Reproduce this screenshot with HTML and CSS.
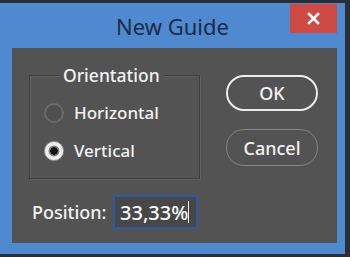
FILE: index.html
```html
<!DOCTYPE html>
<html>
<head>
<meta charset="utf-8">
<link rel="stylesheet" href="styles.css">
</head>
<body>
<div class="window">
  <div class="titlebar">
    <div class="spacer"></div>
    <div class="title">New Guide</div>
    <div class="close">
      <svg width="13" height="13" viewBox="0 0 13 13"><path d="M2 2 L11 11 M11 2 L2 11" stroke="#fff" stroke-width="2.6" stroke-linecap="square"/></svg>
    </div>
  </div>
  <div class="panel">
    <div class="left">
      <div class="group">
        <div class="legend">Orientation</div>
        <div class="radio-row"><span class="radio off"></span><span class="label">Horizontal</span></div>
        <div class="radio-row"><span class="radio on"></span><span class="label">Vertical</span></div>
      </div>
      <div class="position-row">
        <span class="pos-label">Position:</span>
        <div class="input">33,33%<span class="caret"></span></div>
      </div>
    </div>
    <div class="buttons">
      <div class="btn primary">OK</div>
      <div class="btn secondary">Cancel</div>
    </div>
  </div>
</div>
</body>
</html>
```
FILE: styles.css
```css
html, body {
  margin: 0;
  padding: 0;
}
body {
  background: #2a2e35;
  width: 350px;
  height: 257px;
  overflow: hidden;
  font-family: "Noto Sans", "Open Sans", sans-serif;
}
.window {
  margin-top: 3px;
  width: 345px;
  height: 251px;
  background: #4f89cf;
  display: flex;
  flex-direction: column;
}
.titlebar {
  height: 45px;
  display: grid;
  grid-template-columns: 1fr auto 1fr;
  align-items: center;
}
.title {
  font-size: 22px;
  color: #1d2b47;
  line-height: 24px;
  margin-top: 1px;
}
.close {
  justify-self: end;
  align-self: start;
  margin-top: 1px;
  margin-right: 8px;
  width: 47px;
  height: 29px;
  background: #d04a44;
  display: flex;
  align-items: center;
  justify-content: center;
}
.panel {
  margin: 0 8px 0 12px;
  height: 195px;
  background: #535353;
  box-sizing: border-box;
  padding: 27px 0 0 17px;
  display: flex;
  align-items: flex-start;
  color: #f2f2f2;
  font-weight: 500;
}
.left {
  width: 171px;
  display: flex;
  flex-direction: column;
}
.group {
  height: 104px;
  box-sizing: border-box;
  border: 1px solid #3f3f3f;
  box-shadow: 1px 1px 0 #626262, inset 1px 1px 0 #626262;
  padding: 0 0 0 14px;
  display: flex;
  flex-direction: column;
}
.legend {
  align-self: flex-start;
  margin: -11px 0 0 15px;
  padding: 0 4px;
  background: #535353;
  font-size: 17.5px;
  line-height: 20px;
  margin-bottom: 9px;
}
.radio-row {
  height: 38px;
  display: flex;
  align-items: center;
  gap: 10px;
}
.radio {
  width: 20px;
  height: 20px;
  box-sizing: border-box;
  border-radius: 50%;
  flex: none;
}
.radio.off {
  border: 2px solid #6a6a6a;
  background: #4f4f4f;
}
.radio.on {
  border: 1px solid #9a9a9a;
  background: radial-gradient(circle, #151515 0 3.5px, #7c7c7c 4px 5px, #eeeeee 5.8px);
}
.label {
  font-size: 17px;
  line-height: 22px;
}
.position-row {
  margin-top: 16px;
  display: flex;
  align-items: center;
  height: 34px;
}
.pos-label {
  margin-left: 3px;
  font-size: 18px;
  width: 81px;
}
.input {
  width: 85px;
  height: 34px;
  box-sizing: border-box;
  border: 2px solid #2b5b9e;
  background: #474747;
  font-size: 20px;
  color: #fafafa;
  display: flex;
  align-items: center;
  padding-left: 5px;
}
.caret {
  width: 1px;
  height: 22px;
  background: #f0f0f0;
  margin-left: 0;
}
.buttons {
  margin-left: 26px;
  width: 92px;
  display: flex;
  flex-direction: column;
  gap: 18px;
}
.btn {
  height: 36px;
  box-sizing: border-box;
  border-radius: 18px;
  display: flex;
  align-items: center;
  justify-content: center;
  font-size: 18px;
}
.btn.primary {
  border: 2px solid #ececec;
}
.btn.secondary {
  border: 1.5px solid #858585;
  height: 37px;
}
```
